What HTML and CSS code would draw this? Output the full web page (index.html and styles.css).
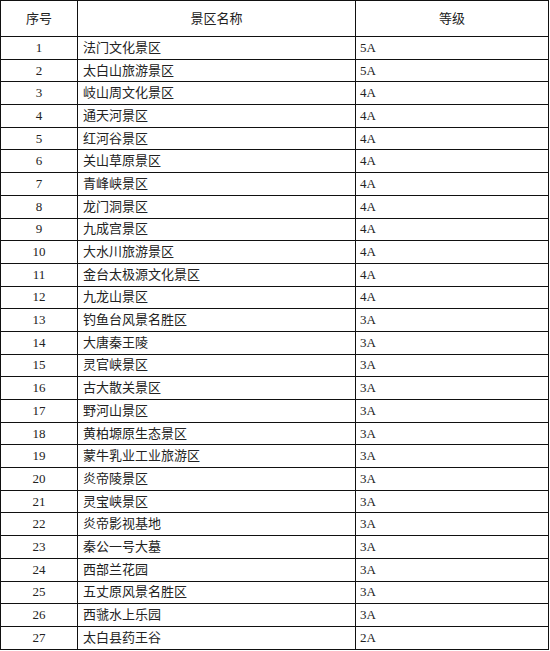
FILE: index.html
```html
<!DOCTYPE html>
<html lang="zh">
<head>
<meta charset="utf-8">
<link rel="stylesheet" href="styles.css">
</head>
<body>
<table class="list">
<colgroup><col class="c1"><col class="c2"><col class="c3"></colgroup>
<thead>
<tr class="head"><th>序号</th><th>景区名称</th><th>等级</th></tr>
</thead>
<tbody>
<tr><td class="no">1</td><td class="name">法门文化景区</td><td class="lv">5A</td></tr>
<tr><td class="no">2</td><td class="name">太白山旅游景区</td><td class="lv">5A</td></tr>
<tr><td class="no">3</td><td class="name">岐山周文化景区</td><td class="lv">4A</td></tr>
<tr><td class="no">4</td><td class="name">通天河景区</td><td class="lv">4A</td></tr>
<tr><td class="no">5</td><td class="name">红河谷景区</td><td class="lv">4A</td></tr>
<tr><td class="no">6</td><td class="name">关山草原景区</td><td class="lv">4A</td></tr>
<tr><td class="no">7</td><td class="name">青峰峡景区</td><td class="lv">4A</td></tr>
<tr><td class="no">8</td><td class="name">龙门洞景区</td><td class="lv">4A</td></tr>
<tr><td class="no">9</td><td class="name">九成宫景区</td><td class="lv">4A</td></tr>
<tr><td class="no">10</td><td class="name">大水川旅游景区</td><td class="lv">4A</td></tr>
<tr><td class="no">11</td><td class="name">金台太极源文化景区</td><td class="lv">4A</td></tr>
<tr><td class="no">12</td><td class="name">九龙山景区</td><td class="lv">4A</td></tr>
<tr><td class="no">13</td><td class="name">钓鱼台风景名胜区</td><td class="lv">3A</td></tr>
<tr><td class="no">14</td><td class="name">大唐秦王陵</td><td class="lv">3A</td></tr>
<tr><td class="no">15</td><td class="name">灵官峡景区</td><td class="lv">3A</td></tr>
<tr><td class="no">16</td><td class="name">古大散关景区</td><td class="lv">3A</td></tr>
<tr><td class="no">17</td><td class="name">野河山景区</td><td class="lv">3A</td></tr>
<tr><td class="no">18</td><td class="name">黄柏塬原生态景区</td><td class="lv">3A</td></tr>
<tr><td class="no">19</td><td class="name">蒙牛乳业工业旅游区</td><td class="lv">3A</td></tr>
<tr><td class="no">20</td><td class="name">炎帝陵景区</td><td class="lv">3A</td></tr>
<tr><td class="no">21</td><td class="name">灵宝峡景区</td><td class="lv">3A</td></tr>
<tr><td class="no">22</td><td class="name">炎帝影视基地</td><td class="lv">3A</td></tr>
<tr><td class="no">23</td><td class="name">秦公一号大墓</td><td class="lv">3A</td></tr>
<tr><td class="no">24</td><td class="name">西部兰花园</td><td class="lv">3A</td></tr>
<tr><td class="no">25</td><td class="name">五丈原风景名胜区</td><td class="lv">3A</td></tr>
<tr><td class="no">26</td><td class="name">西虢水上乐园</td><td class="lv">3A</td></tr>
<tr><td class="no">27</td><td class="name">太白县药王谷</td><td class="lv">2A</td></tr>
</tbody>
</table>
</body>
</html>
```

FILE: styles.css
```css
html, body {
  margin: 0;
  padding: 0;
  background: #fff;
}
.list {
  border-collapse: collapse;
  table-layout: fixed;
  width: 548px;
  font-family: "Liberation Serif", "Noto Sans CJK SC", serif;
  font-size: 13px;
  color: #222;
}
.c1 { width: 77px; }
.c2 { width: 278px; }
.c3 { width: 193px; }
.list th, .list td {
  border: 1px solid #111;
  padding: 0 5px;
  line-height: 14px;
  white-space: nowrap;
  overflow: hidden;
}
.list th {
  font-weight: normal;
  text-align: center;
  height: 35px;
  padding: 0;
}
.list td {
  height: 21.7px;
}
.list td.no { text-align: center; padding: 0; }
.list td.name { text-align: left; padding-left: 5px; }
.list td.lv { text-align: left; padding-left: 4px; }
```
